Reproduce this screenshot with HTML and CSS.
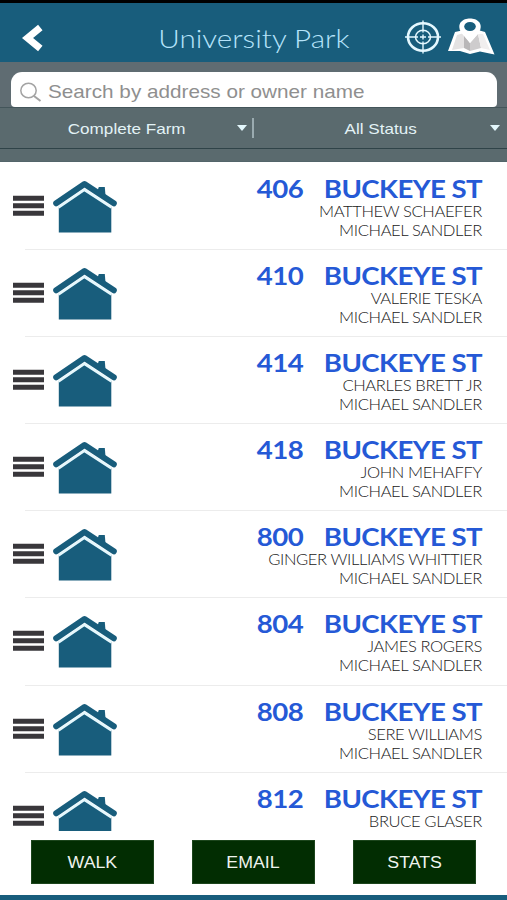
FILE: index.html
```
<!DOCTYPE html>
<html lang="en">
<head>
    <meta charset="UTF-8">
    <meta name="viewport" content="width=device-width, initial-scale=1.0">
    <title>University Park</title>
    <link rel="stylesheet" href="styles.css">
</head>
<body>
    <!-- Shared icons -->
    <svg class="sprite" aria-hidden="true">
        <symbol id="menu" viewBox="0 0 32 22">
            <path d="M1 .8h31v5H1zM1 8.200h31v5H1zM1 15.800h31v5H1z" fill="#39373b"/>
        </symbol>
        <symbol id="house" viewBox="0 0 64 53">
            <path d="M45.800 7h6l1 12-9-6z" fill="#185d7c"/>
            <path d="M5.800 27 31.500 9 58.300 27v25.500H5.800z" fill="#185d7c"/>
            <path d="M5.500 27.500 31.500 9.800 58.500 27.500" fill="none" stroke="#e6f8fd" stroke-width="2.600"/>
            <path d="M3.200 23.300 31.500 4 60.800 23.300" fill="none" stroke="#185d7c" stroke-width="6" stroke-linecap="round" stroke-linejoin="round"/>
        </symbol>
    </svg>

    <header class="topbar">
        <a class="back" href="#" aria-label="Back">
            <svg width="22" height="28" viewBox="0 0 22 28"><path d="M18.300 3.500 5.500 14 18.300 24.500" fill="none" stroke="#fff" stroke-width="7"/></svg>
        </a>
        <h1>University Park</h1>
        <div class="tools">
            <svg width="36" height="34" viewBox="0 0 36 34" fill="none" stroke="#e4f8ff">
                <ellipse cx="18" cy="17" rx="15" ry="13.800" stroke-width="2.600"/>
                <ellipse cx="18" cy="17" rx="7.500" ry="6.800" stroke-width="1.500"/>
                <path d="M18 .5v12M18 21.500v12M0 17h13M23 17h13M15 17h6M18 14.500v5" stroke-width="1.400"/>
            </svg>
            <svg width="48" height="38" viewBox="0 0 48 38">
                <path d="M8 14 17 12 31 12 38 14 47.500 36.500 33 33.500 23 36 13 33 1 33z" fill="#fff"/>
                <path d="M10 17 17 15v15L5 32z" fill="#e4e2e2"/>
                <path d="M17 17 23 25v8l-6-3z" fill="#b9b7b8"/>
                <path d="M23 25 31 16l3 14-11 3z" fill="#cecccd"/>
                <path d="M31 16l5 0 7 16-9-2z" fill="#f0eeee"/>
                <path d="M23 25 14 14.500C9 5 16 .5 23 .5s14 4.500 9 14z" fill="#fff"/>
                <ellipse cx="23" cy="8.500" rx="5.800" ry="4.500" fill="#185d7c"/>
            </svg>
        </div>
    </header>

    <div class="search">
        <div class="search-box">
            <svg width="22" height="20" viewBox="0 0 22 20" fill="none" stroke="#a3a3a3" stroke-width="1.500"><ellipse cx="8.500" cy="8.500" rx="7.700" ry="7.200"/><path d="M14 14 20.500 19" stroke-width="2"/></svg>
            <span class="placeholder">Search by address or owner name</span>
        </div>
    </div>

    <div class="filters">
        <div class="filter"><span>Complete Farm</span><i class="caret"></i></div>
        <div class="filter"><span>All Status</span><i class="caret"></i></div>
    </div>

    <ul class="list">
        <li class="row">
            <svg class="menu"><use href="#menu"/></svg>
            <svg class="house"><use href="#house"/></svg>
            <div class="info">
                <h2><span class="num">406</span><span class="street">BUCKEYE ST</span></h2>
                <p>MATTHEW SCHAEFER</p>
                <p>MICHAEL SANDLER</p>
            </div>
        </li>
        <li class="row">
            <svg class="menu"><use href="#menu"/></svg>
            <svg class="house"><use href="#house"/></svg>
            <div class="info">
                <h2><span class="num">410</span><span class="street">BUCKEYE ST</span></h2>
                <p>VALERIE TESKA</p>
                <p>MICHAEL SANDLER</p>
            </div>
        </li>
        <li class="row">
            <svg class="menu"><use href="#menu"/></svg>
            <svg class="house"><use href="#house"/></svg>
            <div class="info">
                <h2><span class="num">414</span><span class="street">BUCKEYE ST</span></h2>
                <p>CHARLES BRETT JR</p>
                <p>MICHAEL SANDLER</p>
            </div>
        </li>
        <li class="row">
            <svg class="menu"><use href="#menu"/></svg>
            <svg class="house"><use href="#house"/></svg>
            <div class="info">
                <h2><span class="num">418</span><span class="street">BUCKEYE ST</span></h2>
                <p>JOHN MEHAFFY</p>
                <p>MICHAEL SANDLER</p>
            </div>
        </li>
        <li class="row">
            <svg class="menu"><use href="#menu"/></svg>
            <svg class="house"><use href="#house"/></svg>
            <div class="info">
                <h2><span class="num">800</span><span class="street">BUCKEYE ST</span></h2>
                <p>GINGER WILLIAMS WHITTIER</p>
                <p>MICHAEL SANDLER</p>
            </div>
        </li>
        <li class="row">
            <svg class="menu"><use href="#menu"/></svg>
            <svg class="house"><use href="#house"/></svg>
            <div class="info">
                <h2><span class="num">804</span><span class="street">BUCKEYE ST</span></h2>
                <p>JAMES ROGERS</p>
                <p>MICHAEL SANDLER</p>
            </div>
        </li>
        <li class="row">
            <svg class="menu"><use href="#menu"/></svg>
            <svg class="house"><use href="#house"/></svg>
            <div class="info">
                <h2><span class="num">808</span><span class="street">BUCKEYE ST</span></h2>
                <p>SERE WILLIAMS</p>
                <p>MICHAEL SANDLER</p>
            </div>
        </li>
        <li class="row">
            <svg class="menu"><use href="#menu"/></svg>
            <svg class="house"><use href="#house"/></svg>
            <div class="info">
                <h2><span class="num">812</span><span class="street">BUCKEYE ST</span></h2>
                <p>BRUCE GLASER</p>
            </div>
        </li>
    </ul>

    <footer class="actions">
        <button class="btn"><span>WALK</span></button>
        <button class="btn"><span>EMAIL</span></button>
        <button class="btn"><span>STATS</span></button>
    </footer>
</body>
</html>
```
FILE: styles.css
```
* {
    box-sizing: border-box;
}

body {
    font-family: Lato, sans-serif;
    margin: 0;
    height: 900px;
    display: flex;
    flex-direction: column;
    overflow: hidden;
    background: #fff;
    border-top: 3px solid #000;
    border-bottom: 5px solid #185d7c;
}

h1, h2, p, ul {
    margin: 0;
    padding: 0;
}

.sprite {
    display: none;
}

.topbar {
    flex: none;
    height: 59px;
    background: #185d7c;
    display: grid;
    grid-template-columns: 102px 1fr 102px;
    align-items: center;
}

.back {
    padding: 10px 0 0 22px;
    line-height: 0;
}

.topbar h1 {
    justify-self: center;
    padding-top: 11px;
    font-size: 26px;
    font-weight: 300;
    line-height: 30px;
    color: #b5e3fa;
    white-space: nowrap;
    transform: scaleX(1.14);
}

.tools {
    display: flex;
    gap: 6px;
    padding-top: 9px;
    align-items: center;
}

.tools svg {
    flex: none;
}

.search {
    flex: none;
    height: 45px;
    padding: 10px 10px 0 11px;
    background: #5f6c72;
}

.search-box {
    height: 35px;
    display: flex;
    align-items: center;
    gap: 6px;
    padding: 4px 0 0 9px;
    border-radius: 11px 11px 4px 4px;
    background: #fff;
}

.placeholder {
    font: 19px "Liberation Sans", Arial, sans-serif;
    color: #8f8f8f;
    white-space: nowrap;
    transform: scaleX(1.09);
    transform-origin: left;
}

.filters {
    flex: none;
    height: 55px;
    display: grid;
    grid-template-columns: 254px 1fr;
    background: linear-gradient(#2f4348, #2f4348) 0 40px / 100% 1px no-repeat #5a6a6e;
    border-top: 1px solid #43555a;
    border-bottom: 1px solid #53656a;
}

.filter {
    position: relative;
    height: 42px;
    text-align: center;
    font: 15px/42px "Liberation Sans", Arial, sans-serif;
    color: #e3f3f6;
}

.filter span {
    display: inline-block;
    transform: scaleX(1.14);
}

.filter:first-child::after {
    content: "";
    position: absolute;
    right: 0;
    top: 10px;
    width: 2px;
    height: 20px;
    background: #9aabb0;
}

.caret {
    position: absolute;
    right: 7px;
    top: 17px;
    border: 5px solid transparent;
    border-top: 6px solid #e3f7fc;
    border-bottom: 0;
}

.list {
    flex: none;
    height: 669px;
    overflow: hidden;
    list-style: none;
}

.row {
    height: 87.100px;
    display: flex;
    align-items: flex-start;
    padding: 0 25px 0 12px;
}

/* divider sits on the top edge of the next row */
.row + .row {
    background: linear-gradient(#ececec, #ececec) 25px 0 / 100% 1px no-repeat;
}

.menu {
    width: 32px;
    height: 22px;
    margin-top: 33px;
}

.house {
    width: 64px;
    height: 53px;
    margin: 18px 0 0 9px;
}

.info {
    flex: 1;
    text-align: right;
    padding-top: 13px;
}

.info h2 {
    font-size: 24px;
    line-height: 28px;
    font-weight: 700;
    color: #2559d6;
    letter-spacing: -0.5px;
    margin-bottom: -1px;
    white-space: nowrap;
    transform: scaleX(1.15);
    transform-origin: right;
}

.num {
    margin-right: 18px;
}

.info p {
    font-size: 15px;
    line-height: 19px;
    font-weight: 300;
    color: #222;
    letter-spacing: -0.35px;
    white-space: nowrap;
    transform: scaleX(1.105);
    transform-origin: right;
}

.actions {
    flex: 1;
    display: flex;
    align-items: flex-start;
    gap: 38px;
    padding: 9px 31px 0;
}

.btn {
    width: 123px;
    height: 44px;
    padding: 2px 0 0;
    border: 1px solid #1c451c;
    background: #022d02;
    color: #eef3ee;
    font: 16px "Liberation Sans", Arial, sans-serif;
}

.btn span {
    display: inline-block;
    transform: scaleX(1.11);
}
```
